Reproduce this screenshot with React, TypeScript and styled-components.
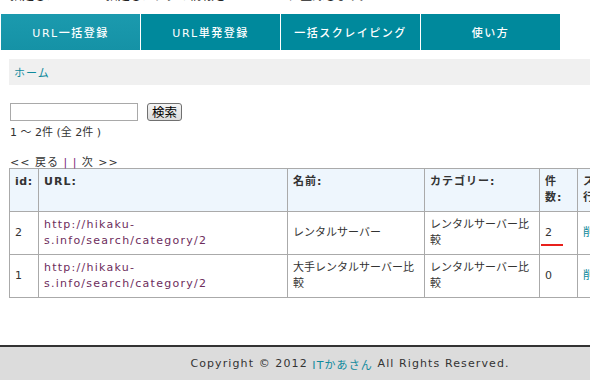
import styled, { createGlobalStyle } from 'styled-components';

const GlobalStyle = createGlobalStyle`
  html, body {
    margin: 0;
    padding: 0;
    background: #fff;
    overflow: hidden;
  }
  body {
    font-family: "DejaVu Sans", Verdana, "Noto Sans CJK JP", sans-serif;
    font-size: 11px;
    color: #333;
  }
`;

const Page = styled.div`
  width: 700px;
  display: flex;
  flex-direction: column;
`;

const Intro = styled.p`
  margin: -13px 0 0 10px;
  font-size: 12px;
  line-height: 18px;
  color: #222;
  white-space: nowrap;
  span {
    color: #2a7fb8;
  }
`;

const Nav = styled.ul`
  display: flex;
  list-style: none;
  margin: 9px 0 0 1px;
  padding: 0;
`;

const NavItem = styled.li<{ $active?: boolean }>`
  width: 139px;
  height: 36px;
  display: flex;
  align-items: center;
  justify-content: center;
  border-right: 1px solid #fff;
  background: ${(p) => (p.$active ? 'linear-gradient(#1b9aae, #1592a6)' : '#00899c')};
  color: #fff;
  font-weight: 500;
  font-size: 11px;
  letter-spacing: 1.5px;
`;

const Breadcrumb = styled.div`
  margin: 9px 0 0 9px;
  height: 26px;
  background: #f0f0f0;
  display: flex;
  align-items: center;
  padding-left: 5px;
  a {
    color: #0f8a9c;
    text-decoration: none;
    letter-spacing: 1px;
  }
`;

const Content = styled.div`
  padding: 18px 0 0 9px;
`;

const SearchForm = styled.form`
  display: flex;
  align-items: center;
  gap: 9px;
  margin-left: 1px;
`;

const SearchInput = styled.input`
  width: 128px;
  height: 18px;
  box-sizing: border-box;
  border: 1px solid #a9a9a9;
  padding: 0 2px;
  margin: 0;
`;

const SearchButton = styled.button`
  height: 18px;
  padding: 0 4px;
  font-family: "Noto Sans CJK JP", sans-serif;
  font-size: 12.5px;
  line-height: 14px;
  border: 1px solid #707070;
  border-radius: 3px;
  background: linear-gradient(#f4f4f4, #dcdcdc);
  color: #000;
`;

const Count = styled.div`
  margin-top: 4px;
  height: 16px;
  line-height: 16px;
  margin-left: 1px;
`;

const Pager = styled.div`
  margin-top: 16px;
  height: 12px;
  line-height: 12px;
  margin-left: 1px;
  letter-spacing: 1px;
  span {
    color: #7a1f7a;
  }
`;

const Table = styled.table`
  border-collapse: collapse;
  width: 678px;
  table-layout: fixed;
  margin-top: -1px;
  th, td {
    border: 1px solid #aaa;
    padding: 5px 5px;
    line-height: 16px;
    text-align: left;
    word-break: break-all;
  }
  th {
    background: #eef6fd;
    vertical-align: top;
    height: 32px;
    font-weight: bold;
    color: #333;
    letter-spacing: 1px;
  }
  th:first-child {
    letter-spacing: 0.5px;
    white-space: nowrap;
  }
  td {
    vertical-align: middle;
    height: 32px;
  }
`;

const UrlLink = styled.a`
  color: #6d2d5c;
  text-decoration: none;
  letter-spacing: 1.25px;
`;

const CountCell = styled.td<{ $marked?: boolean }>`
  position: relative;
  &::after {
    content: '';
    display: ${(p) => (p.$marked ? 'block' : 'none')};
    position: absolute;
    left: 1px;
    width: 22px;
    bottom: 8px;
    height: 2px;
    background: #e8201c;
  }
`;

const ActionLink = styled.a`
  color: #0f8a9c;
  text-decoration: none;
`;

const Footer = styled.footer`
  margin-top: 47px;
  height: 33px;
  border-top: 2px solid #333;
  border-bottom: 1px solid #333;
  background: #dcdcdc;
  display: flex;
  align-items: center;
  justify-content: center;
  letter-spacing: 1.1px;
  a {
    color: #0f8a9c;
    text-decoration: none;
  }
`;

const rows = [
  { id: 2, name: 'レンタルサーバー', category: 'レンタルサーバー比較', count: 2 },
  { id: 1, name: '大手レンタルサーバー比較', category: 'レンタルサーバー比較', count: 0 },
];

export default function App() {
  return (
    <Page>
      <GlobalStyle />
      <Intro>
        指定したURLから指定したタグの情報を<span>WordPress</span>に登録します。
      </Intro>
      <Nav>
        <NavItem $active>URL一括登録</NavItem>
        <NavItem>URL単発登録</NavItem>
        <NavItem>一括スクレイピング</NavItem>
        <NavItem>使い方</NavItem>
      </Nav>
      <Breadcrumb>
        <a href="#">ホーム</a>
      </Breadcrumb>
      <Content>
        <SearchForm onSubmit={(e) => e.preventDefault()}>
          <SearchInput type="text" />
          <SearchButton type="submit">検索</SearchButton>
        </SearchForm>
        <Count>1 ～ 2件 (全 2件 )</Count>
        <Pager>
          &lt;&lt; 戻る <span>| |</span> 次 &gt;&gt;
        </Pager>
        <Table>
          <colgroup>
            <col style={{ width: 29 }} />
            <col style={{ width: 249 }} />
            <col style={{ width: 137 }} />
            <col style={{ width: 115 }} />
            <col style={{ width: 38 }} />
            <col style={{ width: 110 }} />
          </colgroup>
          <thead>
            <tr>
              <th>id:</th>
              <th>URL:</th>
              <th>名前:</th>
              <th>カテゴリー:</th>
              <th>件数:</th>
              <th>スクレイピング実行</th>
            </tr>
          </thead>
          <tbody>
            {rows.map((r) => (
              <tr key={r.id}>
                <td>{r.id}</td>
                <td>
                  <UrlLink href="#">
                    http://hikaku-
                    <br />
                    s.info/search/category/2
                  </UrlLink>
                </td>
                <td>{r.name}</td>
                <td>{r.category}</td>
                <CountCell $marked={r.count > 0}>{r.count}</CountCell>
                <td>
                  <ActionLink href="#">削除</ActionLink>
                </td>
              </tr>
            ))}
          </tbody>
        </Table>
      </Content>
      <Footer>
        Copyright © 2012&nbsp;<a href="#">ITかあさん</a>&nbsp;All Rights Reserved.
      </Footer>
    </Page>
  );
}
